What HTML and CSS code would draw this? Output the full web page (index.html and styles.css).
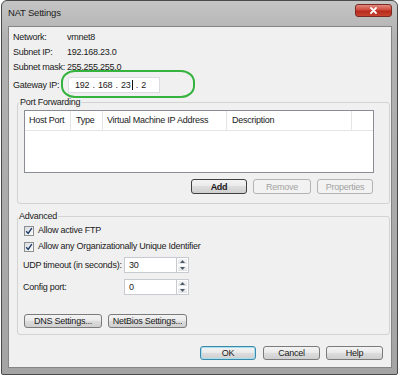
FILE: index.html
```html
<!DOCTYPE html>
<html lang="en">
<head>
  <meta charset="UTF-8">
  <title>NAT Settings</title>
  <link rel="stylesheet" href="styles.css">
</head>
<body>

  <div class="window">
    <div class="titlebar">
      <span class="title">NAT Settings</span>
      <span class="close">
        <svg width="37" height="13" viewBox="0 0 37 13"><path d="M16 4 L21 9 M21 4 L16 9" stroke="#fff" stroke-width="1.8" stroke-linecap="round"/></svg>
      </span>
    </div>

    <div class="content">
      <div class="info">
        <div class="info-row"><span class="info-label">Network:</span><span>vmnet8</span></div>
        <div class="info-row"><span class="info-label">Subnet IP:</span><span>192.168.23.0</span></div>
        <div class="info-row"><span class="info-label">Subnet mask:</span><span>255.255.255.0</span></div>
        <div class="info-row gateway">
          <span class="info-label">Gateway IP:</span>
          <div class="ip-box">192 . 168 . 23<span class="caret"></span> . 2</div>
          <div class="highlight"></div>
        </div>
      </div>

      <fieldset class="group port-group">
        <legend>Port Forwarding</legend>
        <div class="list">
          <div class="list-head">
            <span class="col col-port">Host Port</span>
            <span class="col col-type">Type</span>
            <span class="col col-ip">Virtual Machine IP Address</span>
            <span class="col col-desc">Description</span>
            <span class="col col-rest"></span>
          </div>
        </div>
        <div class="btn-row right">
          <button class="btn btn-add">Add</button>
          <button class="btn btn-remove" disabled>Remove</button>
          <button class="btn btn-props" disabled>Properties</button>
        </div>
      </fieldset>

      <fieldset class="group adv-group">
        <legend>Advanced</legend>
        <label class="check">
          <span class="box"><svg width="8" height="8" viewBox="0 0 8 8"><path d="M1.2 4.2 L3.2 6.4 L6.8 1.2" fill="none" stroke="#1f3d6b" stroke-width="1.4"/></svg></span>
          Allow active FTP
        </label>
        <label class="check">
          <span class="box"><svg width="8" height="8" viewBox="0 0 8 8"><path d="M1.2 4.2 L3.2 6.4 L6.8 1.2" fill="none" stroke="#1f3d6b" stroke-width="1.4"/></svg></span>
          Allow any Organizationally Unique Identifier
        </label>

        <div class="field-row udp-row">
          <span class="field-label">UDP timeout (in seconds):</span>
          <div class="spin">
            <span class="spin-input">30</span>
            <span class="spin-btns">
              <span class="spin-btn"><svg width="5" height="3" viewBox="0 0 5 3"><path d="M0 3 L2.5 0 L5 3 Z" fill="#4d5a6a"/></svg></span>
              <span class="spin-btn"><svg width="5" height="3" viewBox="0 0 5 3"><path d="M0 0 L2.5 3 L5 0 Z" fill="#4d5a6a"/></svg></span>
            </span>
          </div>
        </div>
        <div class="field-row cfg-row">
          <span class="field-label">Config port:</span>
          <div class="spin">
            <span class="spin-input">0</span>
            <span class="spin-btns">
              <span class="spin-btn"><svg width="5" height="3" viewBox="0 0 5 3"><path d="M0 3 L2.5 0 L5 3 Z" fill="#4d5a6a"/></svg></span>
              <span class="spin-btn"><svg width="5" height="3" viewBox="0 0 5 3"><path d="M0 0 L2.5 3 L5 0 Z" fill="#4d5a6a"/></svg></span>
            </span>
          </div>
        </div>

        <div class="btn-row left">
          <button class="btn btn-dns">DNS Settings...</button>
          <button class="btn btn-netbios">NetBios Settings...</button>
        </div>
      </fieldset>

      <div class="btn-row right dialog-btns">
        <button class="btn btn-ok">OK</button>
        <button class="btn btn-cancel">Cancel</button>
        <button class="btn btn-help">Help</button>
      </div>
    </div>
  </div>

</body>
</html>
```

FILE: styles.css
```css
* { box-sizing: border-box; }
body { margin: 0; background: #fff; font-family: "Liberation Sans", Arial, sans-serif; font-size: 9px; letter-spacing: -0.25px; color: #1a1a1a; }

/* window frame */
.window { width: 397px; height: 375px; margin-left: 1px; border: 1px solid #4a4a4a; border-radius: 6px 6px 2px 2px; background: linear-gradient(180deg, #c4c4c4 0%, #b2b2b2 10%, #a4a4a4 100%); }
.titlebar { height: 25px; display: flex; align-items: flex-start; justify-content: space-between; padding: 0 5px 0 6px; }
.title { font-size: 9.5px; letter-spacing: -0.2px; line-height: 24px; color: #1c1c1c; }
.close { display: block; width: 37px; height: 13px; margin-top: 3px; border-radius: 3px; border: 1px solid #7a2a22; background: linear-gradient(180deg, #e08a80 0%, #cf4a3c 45%, #b52a1c 55%, #c8432f 100%); }
.close svg { display: block; margin: -1px 0 0 -1px; }

.content { height: 342px; margin: 0 5px 0 6px; background: #f0f0f0; border: 1px solid #858585; }

/* network info */
.info { padding: 3px 0 0 4px; line-height: 15px; }
.info-row { display: flex; }
.info-label { width: 54px; }
.gateway { position: relative; height: 20px; align-items: center; }
.gateway .info-label { width: 55px; }
.ip-box { width: 92px; height: 16px; padding-left: 6px; line-height: 14px; word-spacing: 1px; background: #fff; border: 1px solid #dadde2; }
.caret { display: inline-block; width: 1px; height: 10px; margin: 0 0 -2px 1px; background: #111; }
.highlight { position: absolute; left: 48px; top: -5px; width: 134px; height: 28px; border: 2px solid #35b33e; border-radius: 14px / 12px; }

/* group boxes */
.group { margin: 1px 1px 0 8px; border: 1px solid #d3d3d3; border-radius: 3px; min-width: 0; }
.group legend { margin-left: -5px; padding: 0 1px; line-height: 12px; }
.port-group { padding: 0 15px 9px 6px; }
.adv-group { margin-top: 6px; padding: 0 6px 6px 5px; }

/* port list */
.list { height: 63px; margin-top: 2px; background: #fff; border: 1px solid #8a8d93; }
.list-head { display: flex; height: 20px; border-bottom: 1px solid #e5e5e5; line-height: 18px; }
.col { padding-left: 4px; border-right: 1px solid #e5e5e5; white-space: nowrap; }
.col-port { width: 46px; }
.col-type { width: 32px; padding-left: 5px; }
.col-ip { width: 124px; }
.col-desc { width: 125px; padding-left: 5px; }
.col-rest { flex: 1; border-right: none; }

/* buttons */
.btn-row { display: flex; gap: 6px; }
.btn-row.right { justify-content: flex-end; }
.port-group .btn-row { margin: 6px 1px 0 0; }
.btn { height: 14px; padding: 0; font: inherit; letter-spacing: inherit; line-height: 12px; color: #1a1a1a; border: 1px solid #7b7b7b; border-radius: 3px; background: linear-gradient(180deg, #f3f3f3 0%, #ebebeb 45%, #dddddd 50%, #cfcfcf 100%); }
.btn:disabled { color: #a2a2a2; border-color: #b3b3b3; background: #f2f2f2; }
.btn-add { width: 56px; height: 15px; border-color: #3f3f3f; font-weight: bold; }
.btn-remove { width: 58px; height: 15px; }
.btn-props { width: 56px; height: 15px; }
.btn-dns { width: 78px; }
.btn-netbios { width: 79px; }
.btn-ok { width: 56px; border-color: #3b8aa8; box-shadow: inset 0 0 0 1px #a6dff2; }
.btn-cancel { width: 57px; margin-left: 1px; }
.btn-help { width: 57px; }
.btn-row.left { margin: 17px 0 0 1px; }
.dialog-btns { margin: 11px 8px 0 0; }

/* advanced options */
.check { display: flex; align-items: center; height: 15px; line-height: 15px; margin-top: 1px; }
.check + .check { margin-top: 1px; }
.box { display: flex; align-items: center; justify-content: center; width: 10px; height: 10px; margin: 0 4px 0 1px; border: 1px solid #8e8f8f; background: linear-gradient(135deg, #d9dde2, #fbfbfb); }
.field-row { display: flex; align-items: center; height: 20px; }
.udp-row { margin-top: 1px; }
.cfg-row { margin-top: 2px; }
.field-label { width: 101px; white-space: nowrap; }
.spin { display: flex; height: 16px; }
.spin-input { width: 52px; padding-left: 4px; line-height: 14px; background: #fff; border: 1px solid #c7cacf; border-right: none; }
.spin-btns { display: flex; flex-direction: column; width: 13px; border: 1px solid #c7cacf; }
.spin-btn { flex: 1; display: flex; align-items: center; justify-content: center; background: linear-gradient(180deg, #f4f4f4, #e2e4e7); border: 1px solid #fff; }
.spin-btn svg { display: block; }
```
